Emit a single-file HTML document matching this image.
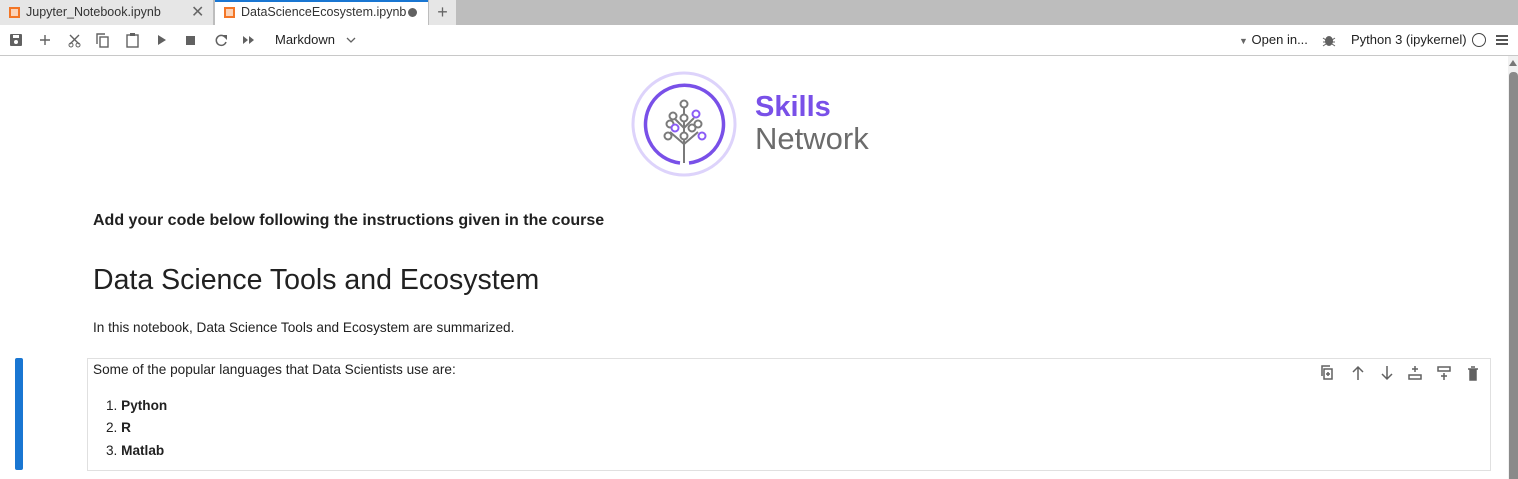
<!DOCTYPE html>
<html><head><meta charset="utf-8"><style>
*{box-sizing:border-box;margin:0;padding:0}
body{width:1518px;height:479px;overflow:hidden;background:#fff;font-family:"Liberation Sans",sans-serif;color:#212121;position:relative}
.tabs{position:absolute;left:0;top:0;width:1518px;height:25px;background:#bdbdbd}
.tab{position:absolute;top:0;height:25px;font-size:12.5px;line-height:25px;color:#333}
.tb{position:absolute;top:25px;left:0;width:1518px;height:31px;border-bottom:1px solid #c8c8c8;background:#fff}
.t{position:absolute;white-space:nowrap}
</style></head><body>
<div class="tabs">
 <div class="tab" style="left:0;width:214px;background:#e6e6e6;border-right:1px solid #bdbdbd">
  <span style="position:absolute;left:9px;top:7px;width:11px;height:11px;border:2px solid #f37626;background:#fbd3b8"></span>
  <span style="position:absolute;left:26px">Jupyter_Notebook.ipynb</span>
  <span style="position:absolute;left:191px;font-size:16px;color:#666">✕</span>
 </div>
 <div class="tab" style="left:215px;width:213px;background:#fff;border-top:2px solid #1976d2;line-height:21px">
  <span style="position:absolute;left:9px;top:5px;width:11px;height:11px;border:2px solid #f37626;background:#fbd3b8"></span>
  <span style="position:absolute;left:26px">DataScienceEcosystem.ipynb</span>
  <span style="position:absolute;left:193px;top:6px;width:9px;height:9px;border-radius:50%;background:#616161"></span>
 </div>
 <div class="tab" style="left:429px;width:27px;background:#e6e6e6;text-align:center;font-size:18px;color:#666">+</div>
</div>
<div class="tb"></div>
<svg style="position:absolute;left:0;top:25px" width="380" height="30" fill="#616161" stroke="#616161">
 <rect x="10" y="9" width="12" height="12" rx="1" stroke="none"/><rect x="13" y="10" width="6" height="3" fill="#fff" stroke="none"/><circle cx="16" cy="17" r="2" fill="#fff" stroke="none"/>
 <path d="M45 10v10M40 15h10" stroke-width="1.4" fill="none"/>
 <path d="M70 10l9 9M79 10l-9 9" stroke-width="1.4" fill="none"/><circle cx="71" cy="20" r="2" fill="none"/><circle cx="78" cy="20" r="2" fill="none"/>
 <rect x="100" y="12" width="8" height="10" fill="none" stroke-width="1.4"/><path d="M97 19V9h8" fill="none" stroke-width="1.4"/>
 <rect x="127" y="10" width="11" height="12" fill="none" stroke-width="1.4"/><rect x="130" y="8" width="5" height="3" stroke="none"/>
 <path d="M158 10l8 5-8 5z" stroke="none"/>
 <rect x="186" y="11" width="9" height="9" stroke="none"/>
 <path d="M225 12a5 5 0 1 0 1 5" fill="none" stroke-width="1.5"/><path d="M222 10h5v5z" stroke="none"/>
 <path d="M243 11l5 4-5 4zM249 11l5 4-5 4z" stroke="none"/>
 <path d="M347 13l4 4 4-4" fill="none" stroke-width="1.3"/>
</svg>
<div class="t" style="left:275px;top:32px;font-size:13px;color:#222">Markdown</div>
<div class="t" style="left:1239px;top:32px;font-size:13px;color:#222"><span style="font-size:9px;color:#666">▼</span> Open in...</div>
<svg style="position:absolute;left:1322px;top:33px" width="14" height="14"><ellipse cx="7" cy="8" rx="4" ry="5" fill="#616161"/><path d="M1 5l3 2M13 5l-3 2M1 9h3M13 9h-3M1 13l3-2M13 13l-3-2" stroke="#616161"/></svg>
<div class="t" style="left:1351px;top:32px;font-size:13px;color:#222">Python 3 (ipykernel)</div>
<div style="position:absolute;left:1472px;top:33px;width:14px;height:14px;border:1.5px solid #444;border-radius:50%"></div>
<div style="position:absolute;left:1496px;top:35px;width:12px;height:10px;border-top:2px solid #555;border-bottom:2px solid #555"><div style="margin-top:2px;height:2px;background:#555"></div></div>
<div style="position:absolute;left:1508px;top:56px;width:10px;height:423px;background:#f1f1f1"></div>
<div style="position:absolute;left:1509px;top:72px;width:9px;height:407px;background:#8a8a8a;border-radius:4px 4px 0 0"></div>
<div style="position:absolute;left:1509px;top:60px;width:0;height:0;border-left:4.5px solid transparent;border-right:4.5px solid transparent;border-bottom:6px solid #777"></div>
<svg style="position:absolute;left:630px;top:70px" width="110" height="110">
 <circle cx="54" cy="54" r="51" fill="none" stroke="#ddd3fb" stroke-width="3"/>
 <path d="M50 93A39 39 0 1 1 59 93" fill="none" stroke="#7950e8" stroke-width="3.5"/>
 <g fill="none" stroke="#7a7a7a" stroke-width="2">
 <path d="M54 36V93M44 48l10 10 10-10M40 62l14 12 14-12M54 58V50"/>
 <circle cx="54" cy="34" r="3.5" fill="#fff"/><circle cx="54" cy="48" r="3.5" fill="#fff"/><circle cx="43" cy="46" r="3.5" fill="#fff"/><circle cx="40" cy="54" r="3.5" fill="#fff"/><circle cx="68" cy="54" r="3.5" fill="#fff"/><circle cx="62" cy="58" r="3.5" fill="#fff"/><circle cx="54" cy="66" r="3.5" fill="#fff"/><circle cx="38" cy="66" r="3.5" fill="#fff"/>
 </g>
 <g fill="#fff" stroke="#8b5cf6" stroke-width="2"><circle cx="66" cy="44" r="3.5"/><circle cx="45" cy="58" r="3.5"/><circle cx="72" cy="66" r="3.5"/></g>
</svg>
<div class="t" style="left:755px;top:91px;font-size:29px;font-weight:bold;color:#7950e8">Skills</div>
<div class="t" style="left:755px;top:121px;font-size:31px;color:#6c6c6c">Network</div>
<div class="t" style="left:93px;top:212px;font-size:16px;font-weight:bold;color:#212121">Add your code below following the instructions given in the course</div>
<div class="t" style="left:93px;top:264px;font-size:28.5px;color:#212121">Data Science Tools and Ecosystem</div>
<div class="t" style="left:93px;top:320px;font-size:13.6px">In this notebook, Data Science Tools and Ecosystem are summarized.</div>
<div style="position:absolute;left:15px;top:358px;width:8px;height:112px;background:#1976d2;border-radius:2px"></div>
<div style="position:absolute;left:87px;top:358px;width:1404px;height:113px;border:1px solid #e0e0e0"></div>
<div class="t" style="left:93px;top:362px;font-size:13.6px">Some of the popular languages that Data Scientists use are:</div>
<div class="t" style="left:106px;top:398px;font-size:13.6px">1. <b>Python</b></div>
<div class="t" style="left:106px;top:420px;font-size:13.6px">2. <b>R</b></div>
<div class="t" style="left:106px;top:443px;font-size:13.6px">3. <b>Matlab</b></div>
<svg style="position:absolute;left:1320px;top:364px" width="165" height="20" fill="none" stroke="#616161" stroke-width="1.5">
 <rect x="4" y="5" width="8" height="10"/><path d="M2 12V2h8M8 8v4M6 10h4"/>
 <path d="M38 16V3M33 8l5-5 5 5"/>
 <path d="M67 2v13M62 10l5 5 5-5"/>
 <rect x="89" y="11" width="12" height="4"/><path d="M95 2v6M92 5h6"/>
 <rect x="118" y="3" width="12" height="4"/><path d="M124 9v7M121 12h6"/>
 <path d="M148 5h10M150 6h6v10h-6z" fill="#616161"/><path d="M151 3h4"/>
</svg>
</body></html>
